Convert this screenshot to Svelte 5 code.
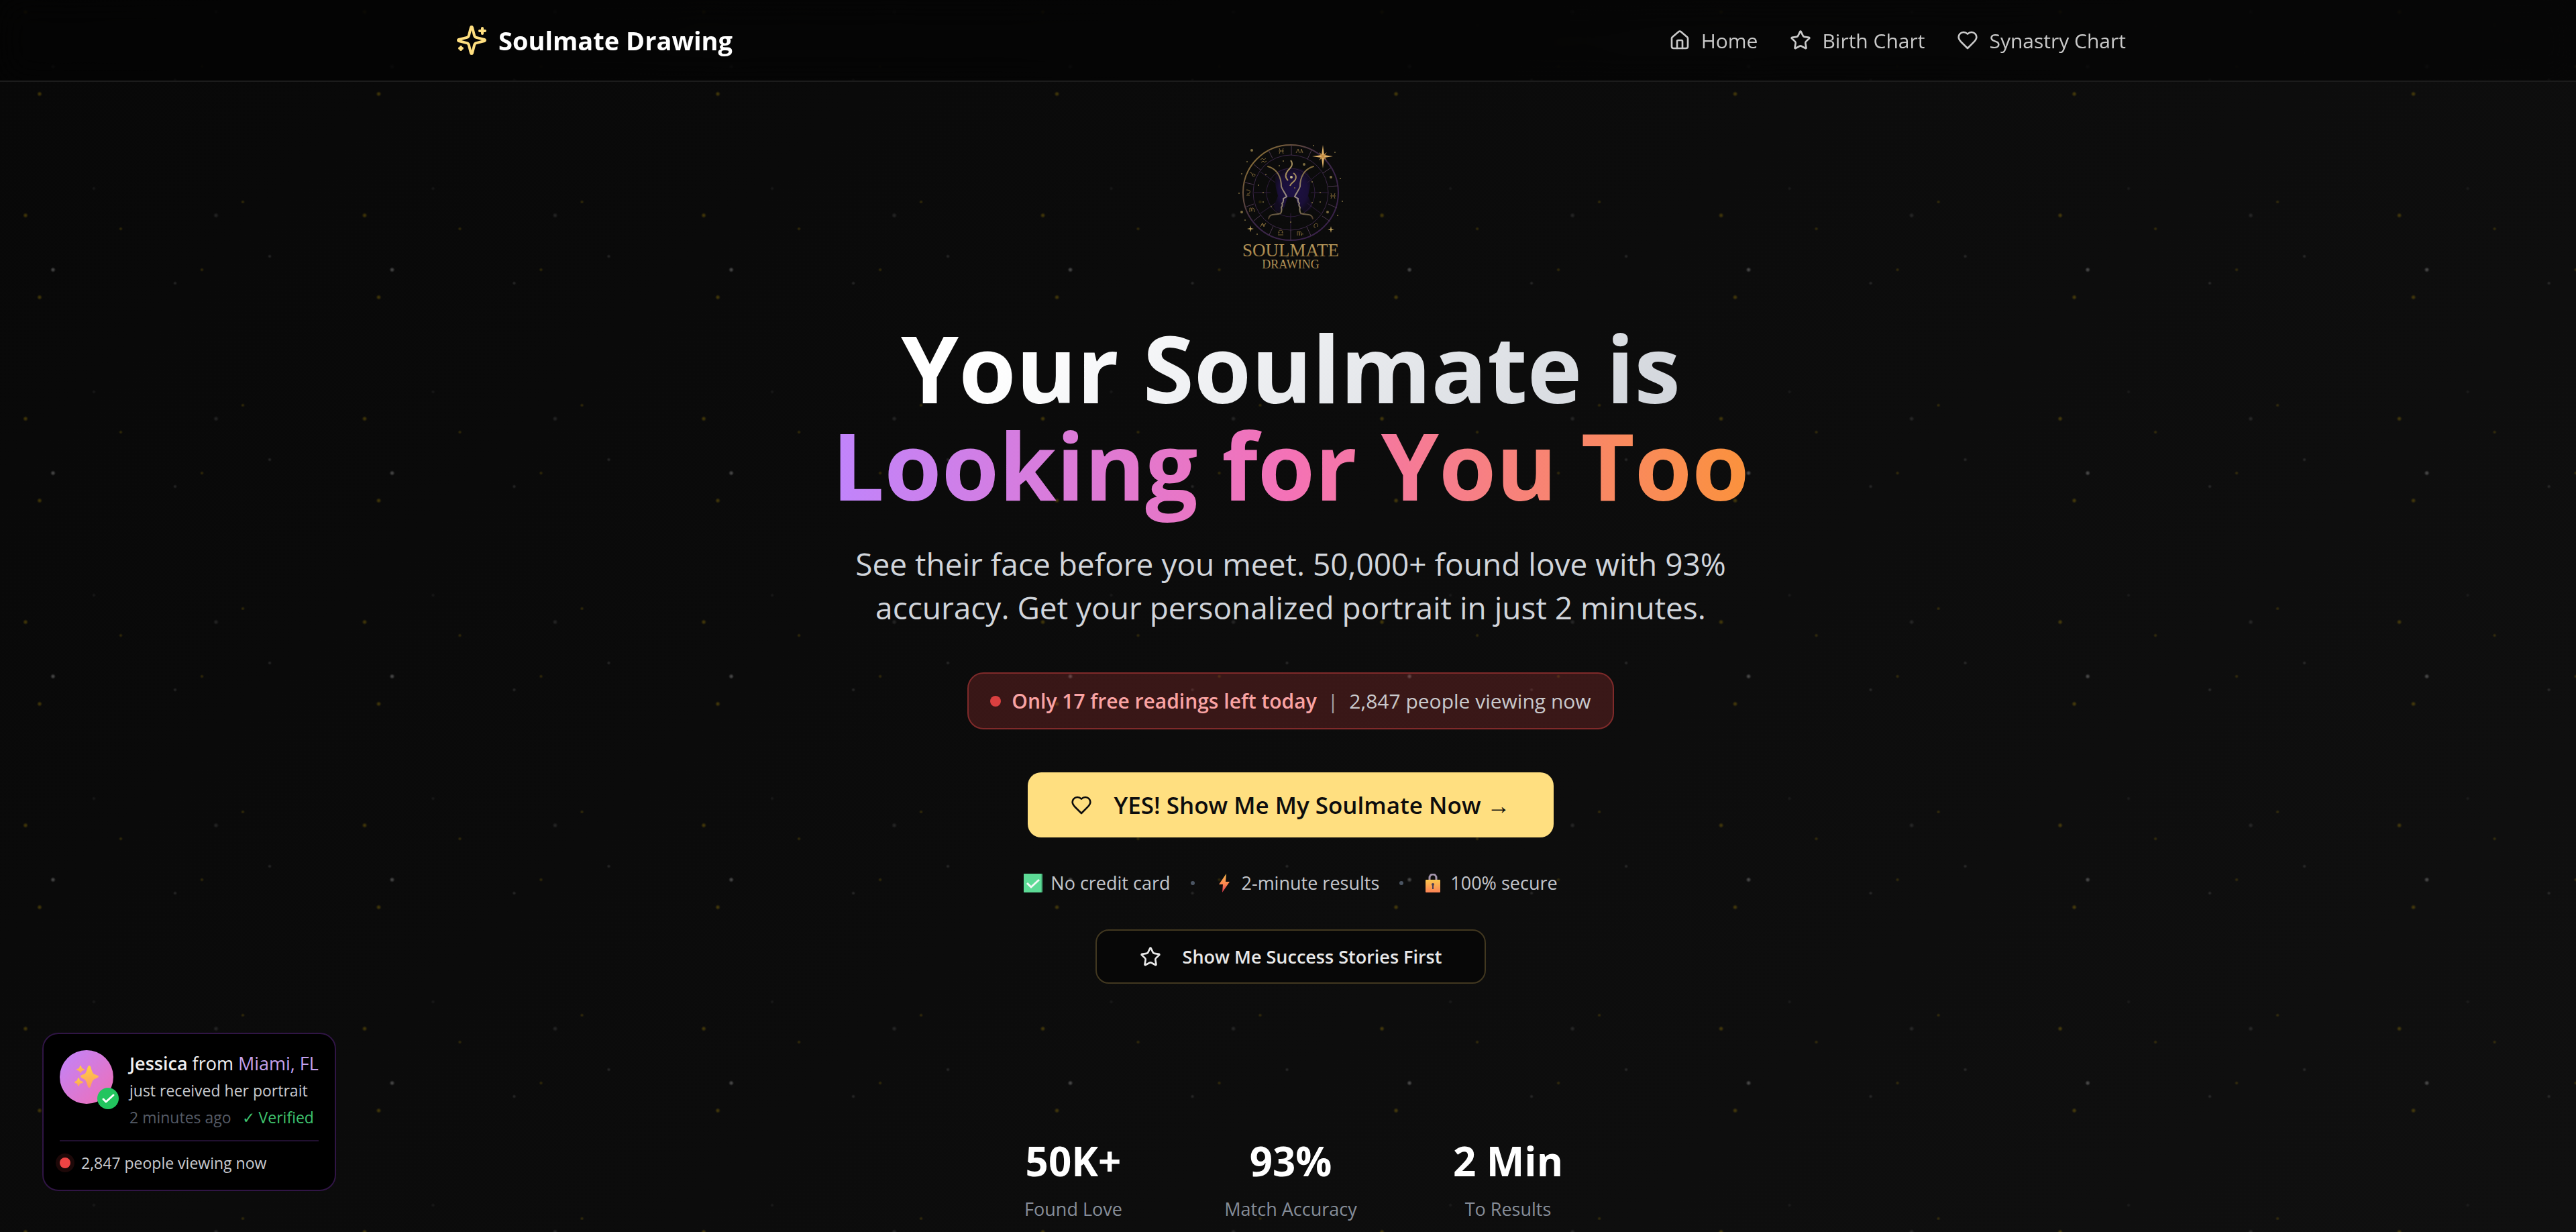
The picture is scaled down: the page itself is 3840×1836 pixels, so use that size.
<script>
    let spotsLeft = $state(17);
    let viewers = $state(2847);

    const navLinks = [
        { label: "Home", href: "#home", icon: "home" },
        { label: "Birth Chart", href: "#birth-chart", icon: "star" },
        { label: "Synastry Chart", href: "#synastry-chart", icon: "heart" },
    ];

    const stats = [
        { value: "50K+", label: "Found Love" },
        { value: "93%", label: "Match Accuracy" },
        { value: "2 Min", label: "To Results" },
    ];

    const icons = {
        home: [
            "M15 21v-8a1 1 0 0 0-1-1h-4a1 1 0 0 0-1 1v8",
            "M3 10a2 2 0 0 1 .709-1.528l7-5.999a2 2 0 0 1 2.582 0l7 5.999A2 2 0 0 1 21 10v9a2 2 0 0 1-2 2H5a2 2 0 0 1-2-2z",
        ],
        star: [
            "M11.525 2.295a.53.53 0 0 1 .95 0l2.31 4.679a2.123 2.123 0 0 0 1.595 1.16l5.166.756a.53.53 0 0 1 .294.904l-3.736 3.638a2.123 2.123 0 0 0-.611 1.878l.882 5.14a.53.53 0 0 1-.771.56l-4.618-2.428a2.122 2.122 0 0 0-1.973 0L6.396 21.01a.53.53 0 0 1-.77-.56l.881-5.139a2.122 2.122 0 0 0-.611-1.879L2.16 9.795a.53.53 0 0 1 .294-.906l5.165-.755a2.122 2.122 0 0 0 1.597-1.16z",
        ],
        heart: [
            "M19 14c1.49-1.46 3-3.21 3-5.5A5.5 5.5 0 0 0 16.5 3c-1.76 0-3 .5-4.5 2-1.5-1.5-2.74-2-4.5-2A5.5 5.5 0 0 0 2 8.5c0 2.3 1.5 4.05 3 5.5l7 7Z",
        ],
        sparkles: [
            "M9.937 15.5A2 2 0 0 0 8.5 14.063l-6.135-1.582a.5.5 0 0 1 0-.962L8.5 9.936A2 2 0 0 0 9.937 8.5l1.582-6.135a.5.5 0 0 1 .963 0L14.063 8.5A2 2 0 0 0 15.5 9.937l6.135 1.581a.5.5 0 0 1 0 .964L15.5 14.063a2 2 0 0 0-1.437 1.437l-1.582 6.135a.5.5 0 0 1-.963 0z",
            "M20 3v4",
            "M22 5h-4",
            "M4 17v2",
            "M5 18H3",
        ],
    };

    // zodiac wheel, in the logo's own 210 x 230 units
    const dividers = [
        [106, 26, 106, 41],
        [72, 34, 78, 46],
        [136, 34, 130, 47],
        [50, 55, 61, 64],
        [165, 60, 153, 68],
        [37, 82, 50, 85],
        [161, 88, 175, 87],
        [39, 118, 50, 114],
        [161, 114, 174, 120],
        [50, 139, 60, 131],
        [152, 132, 164, 140],
        [73, 160, 79, 147],
        [129, 148, 135, 161],
        [105, 152, 105, 168],
    ];

    const zodiac = [
        { x: 118, y: 35, d: "M-5 3l3-6l2 6M2 3l1-6l2 6" },
        { x: 91, y: 35, d: "M-3-4q3 4 0 8M3-4q-3 4 0 8M-4 0h8" },
        { x: 65, y: 49, d: "M-5-1l3-2l2 2l3-2M-4 3l3-2l2 2l3-2" },
        { x: 48, y: 70, d: "M-4-3q4 0 4 5q4 2 4-2q-3-2-5 1" },
        { x: 42, y: 97, d: "M-3 4h5M-3-4q7 0 5 4q-1 3-4 2" },
        { x: 48, y: 123, d: "M-4 3v-6q3-1 3 5v-5q4-1 4 6" },
        { x: 64, y: 145, d: "M-4 3l3-6l2 6l3-6M-3 0h6" },
        { x: 90, y: 157, d: "M-4 3h8M-4 0h2q-2-4 2-4t2 4h2" },
        { x: 119, y: 158, d: "M-4 3v-6q3-1 3 6v-6q3-1 3 6q1-4 3-2" },
        { x: 143, y: 146, d: "M-3 2q-1-4 3-5q4 1 2 5M-3 2a1 1 0 1 0 2 0" },
        { x: 168, y: 102, d: "M-3-4q3 4 0 8M3-4q-3 4 0 8M-4 0h8" },
    ];

    // x, y, radius
    const dust = [
        [47, 34, 2],
        [40, 51, 1],
        [32, 69, 1],
        [28, 98, 1],
        [32, 126, 2],
        [37, 138, 1],
        [55, 159, 1],
        [139, 27, 1],
        [171, 37, 1],
        [165, 74, 2],
        [179, 76, 1],
        [182, 110, 1],
        [160, 126, 2],
        [175, 131, 1],
        [94, 50, 1],
        [88, 57, 1],
        [125, 55, 2],
        [68, 70, 1],
        [57, 86, 1],
        [64, 97, 1],
        [64, 111, 1],
        [76, 118, 1],
        [137, 81, 1],
        [149, 97, 1],
        [137, 112, 1],
        [105, 141, 1],
        [111, 90, 1],
        [149, 111, 1],
    ];
</script>

{#snippet icon(name)}
    <svg
        class="icon"
        viewBox="0 0 24 24"
        fill="none"
        stroke="currentColor"
        stroke-width="2"
        stroke-linecap="round"
        stroke-linejoin="round"
        aria-hidden="true"
    >
        {#each icons[name] as d}
            <path {d} />
        {/each}
    </svg>
{/snippet}

<div class="page">
    <header class="header">
        <div class="header-inner">
            <a class="brand" href="#home">
                {@render icon("sparkles")}
                <span>Soulmate Drawing</span>
            </a>
            <nav class="nav">
                {#each navLinks as link}
                    <a href={link.href}>
                        {@render icon(link.icon)}
                        <span>{link.label}</span>
                    </a>
                {/each}
            </nav>
        </div>
    </header>

    <main class="hero">
        <svg class="logo" viewBox="0 0 210 230" role="img" aria-label="Soulmate Drawing">
            <defs>
                <linearGradient id="ring" x1="0" y1="0" x2="1" y2="1">
                    <stop offset="0.1" stop-color="#8f7437" />
                    <stop offset="0.45" stop-color="#3b2747" />
                    <stop offset="1" stop-color="#38204a" />
                </linearGradient>
                <linearGradient id="face" x1="0" y1="0" x2="0" y2="1">
                    <stop offset="0" stop-color="#7d6636" />
                    <stop offset="0.6" stop-color="#9c9088" />
                    <stop offset="0.85" stop-color="#807456" />
                    <stop offset="1" stop-color="#4a3826" />
                </linearGradient>
                <linearGradient id="gold" x1="0" y1="0" x2="0" y2="1">
                    <stop offset="0" stop-color="#c9a765" />
                    <stop offset="1" stop-color="#94753f" />
                </linearGradient>
                <radialGradient id="aura">
                    <stop offset="0" stop-color="#1d1145" />
                    <stop offset="0.75" stop-color="#1a0f38" />
                    <stop offset="1" stop-color="#120c20" />
                </radialGradient>
            </defs>
            <path
                d="M86 65q10-5 20-4q12-1 22 4q8 8 6 22l-3 15l6 14q-2 8-12 10l-9-10l-4-12h-12l-4 14l-6 9q-10-3-10-10l6-15l-3-12q-3-18 3-25z"
                fill="url(#aura)"
            />
            <g fill="none" stroke="#2e1c3c">
                <circle cx="105" cy="97" r="36" />
                <path d="M50 97h25M135 97h26M60 66l22 16M60 128l22-15M150 128l-20-15M150 66l-20 16M105 128v24" />
            </g>
            <circle cx="105" cy="97" r="71" fill="none" stroke="url(#ring)" stroke-width="2" />
            <circle cx="105" cy="97" r="56" fill="none" stroke="#3b2747" />
            <g stroke="#4d3850">
                {#each dividers as [x1, y1, x2, y2]}
                    <line {x1} {y1} {x2} {y2} />
                {/each}
            </g>
            <g fill="none" stroke="#7a6335">
                {#each zodiac as sign}
                    <path d={sign.d} transform="translate({sign.x} {sign.y})" />
                {/each}
            </g>
            <g fill="#7d6c3f">
                {#each dust as [cx, cy, r]}
                    <circle {cx} {cy} {r} />
                {/each}
            </g>
            <g fill="none" stroke="url(#face)" stroke-width="2" stroke-linecap="round">
                <path d="M71 58c14 4 20 16 20 30c2 6 6 10 8 15l-5 3c0 3 1 5-2 7c1 2 1 4-1 6c1 4 1 6-1 9c-8 3-16-1-18 8" />
                <path d="M139 58c-14 4-20 16-20 30c-2 6-6 10-8 15l5 3c0 3-1 5 2 7c-1 2-1 4 1 6c-1 4-1 6 1 9c8 3 16-1 18 8" />
            </g>
            <g fill="none" stroke="#a48d5c" stroke-width="2">
                <path d="M105 49c5 6 0 11-4 15c-5 6-4 11 0 15" />
                <path d="M109 68c5 3 5 8 1 12c-3 3-5 4-6 7" />
            </g>
            <circle cx="106" cy="74" r="2" fill="#c9bc8c" />
            <path d="M153 26l2 15l13 2l-13 2l-2 16l-2-16l-14-2l14-2z" fill="#e0b267" />
            <path d="M147 37l6 4l6-4l-4 6l4 6l-6-4l-6 4l4-6z" fill="#c58f45" />
            <path d="M45 146l1 4l4 1l-4 1l-1 4l-1-4l-4-1l4-1zM165 147l1 4l4 1l-4 1l-1 4l-1-4l-4-1l4-1z" fill="#b39857" />
            <text class="logo-name" x="105" y="192">SOULMATE</text>
            <text class="logo-sub" x="105" y="210">DRAWING</text>
        </svg>

        <h1>
            <span class="title-light">Your Soulmate is</span>
            <span class="title-color">Looking for You Too</span>
        </h1>

        <p class="lead">
            See their face before you meet. 50,000+ found love with 93%
            accuracy. Get your personalized portrait in just 2 minutes.
        </p>

        <div class="urgency">
            <span class="dot"></span>
            <strong>Only {spotsLeft} free readings left today</strong>
            <span class="bar">|</span>
            <span>{viewers.toLocaleString("en-US")} people viewing now</span>
        </div>

        <button class="cta">
            {@render icon("heart")}
            <span>YES! Show Me My Soulmate Now →</span>
        </button>

        <ul class="trust">
            <li>
                <svg class="emoji" viewBox="0 0 28 28" aria-hidden="true">
                    <rect width="28" height="28" rx="1" fill="#4bb67d" />
                    <rect width="26" height="28" rx="1" fill="#5ddb96" />
                    <path d="M5 14l6 6L23 9" fill="none" stroke="#f4f8f6" stroke-width="3" />
                </svg>
                No credit card
            </li>
            <li class="sep"></li>
            <li>
                <svg class="emoji" viewBox="0 0 28 28" aria-hidden="true">
                    <defs>
                        <linearGradient id="bolt" x1="0" y1="0" x2="0" y2="1">
                            <stop offset="0" stop-color="#fbbd4c" />
                            <stop offset="0.55" stop-color="#fb8550" />
                            <stop offset="1" stop-color="#e03650" />
                        </linearGradient>
                    </defs>
                    <path d="M17 0L6 16h6l-1 12L22 12h-6z" fill="url(#bolt)" />
                </svg>
                2-minute results
            </li>
            <li class="sep"></li>
            <li>
                <svg class="emoji" viewBox="0 0 28 28" aria-hidden="true">
                    <defs>
                        <linearGradient id="lock" x1="0" y1="0" x2="0" y2="1">
                            <stop offset="0" stop-color="#fbc64d" />
                            <stop offset="1" stop-color="#fb8255" />
                        </linearGradient>
                    </defs>
                    <path d="M9 10V6a5 5 0 0 1 10 0v4" fill="none" stroke="#a394ab" stroke-width="3" />
                    <rect x="3" y="9" width="22" height="19" rx="1" fill="url(#lock)" />
                    <circle cx="14" cy="16" r="2" fill="#4b3d53" />
                    <path d="M14 16v7" stroke="#4b3d53" stroke-width="2" />
                </svg>
                100% secure
            </li>
        </ul>

        <button class="stories">
            {@render icon("star")}
            <span>Show Me Success Stories First</span>
        </button>

        <dl class="stats">
            {#each stats as stat}
                <div class="stat">
                    <dd>{stat.value}</dd>
                    <dt>{stat.label}</dt>
                </div>
            {/each}
        </dl>
    </main>

    <aside class="toast">
        <div class="toast-main">
            <div class="avatar">
                <svg class="avatar-spark" viewBox="0 0 36 34" aria-hidden="true">
                    <defs>
                        <linearGradient id="spark" x1="0" y1="0" x2="0" y2="1">
                            <stop offset="0" stop-color="#ffd23f" />
                            <stop offset="1" stop-color="#ff9d62" />
                        </linearGradient>
                    </defs>
                    <g fill="url(#spark)">
                        <path d="M22 0q2 0 3 5q2 7 5 8q6 2 6 3q0 2-6 4q-3 1-5 8q-1 5-3 5t-3-5q-2-7-5-8q-5-2-5-4t5-3q3-1 5-8q1-5 3-5z" />
                        <path d="M9 0q1 0 2 4q4 1 4 2t-4 2q-1 3-2 3t-2-3q-4-1-4-2t4-2q1-4 2-4z" />
                        <path d="M6 18q1 0 2 4q5 2 5 3t-5 2q-1 4-2 4t-2-4q-4-1-4-2t4-3q1-4 2-4z" />
                    </g>
                </svg>
                <svg class="avatar-check" viewBox="0 0 32 32" aria-hidden="true">
                    <circle cx="16" cy="16" r="16" fill="#22c55e" />
                    <path
                        d="M9 17l4 4L24 11"
                        fill="none"
                        stroke="#fff"
                        stroke-width="3"
                        stroke-linecap="round"
                        stroke-linejoin="round"
                    />
                </svg>
            </div>
            <div class="toast-body">
                <p class="toast-who">
                    <strong>Jessica</strong> from <span>Miami, FL</span>
                </p>
                <p class="toast-what">just received her portrait</p>
                <p class="toast-when">
                    <span>2 minutes ago</span>
                    <span class="verified">✓ Verified</span>
                </p>
            </div>
        </div>
        <p class="toast-live">
            <span class="dot"></span>
            {viewers.toLocaleString("en-US")} people viewing now
        </p>
    </aside>
</div>

<style>
    :global(body) {
        background: #0c0c0c;
    }

    .page {
        --gold-strong: rgba(255, 205, 0, 0.22);
        --gold: rgba(255, 205, 0, 0.14);
        --white-strong: rgba(255, 255, 255, 0.24);
        --white: rgba(255, 255, 255, 0.1);
        --tile: calc(100vw * 250 / 1899) 303px;
        min-height: 100vh;
        box-sizing: border-box;
        font-family: "Segoe UI", "Open Sans", "Noto Sans", sans-serif;
        color: #fff;
        background:
            radial-gradient(circle at 38px 18px, var(--gold-strong) 1px, transparent 4px),
            radial-gradient(circle at 79px 99px, var(--white-strong) 1px, transparent 4px),
            radial-gradient(circle at 59px 140px, var(--gold-strong) 1px, transparent 4px),
            radial-gradient(circle at 322px 18px, var(--white) 1px, transparent 4px),
            radial-gradient(circle at 180px 38px, var(--gold) 1px, transparent 3px),
            radial-gradient(circle at 362px 301px, var(--gold) 1px, transparent 3px),
            radial-gradient(circle at 301px 99px, var(--gold) 1px, transparent 3px),
            radial-gradient(circle at 402px 79px, var(--white) 1px, transparent 3px),
            radial-gradient(circle at 261px 119px, var(--white) 1px, transparent 3px),
            radial-gradient(circle at 140px 281px, rgba(255, 255, 255, 0.05) 1px, transparent 3px),
            linear-gradient(135deg, #080808, #101010);
        background-size:
            var(--tile), var(--tile), var(--tile), var(--tile), var(--tile),
            var(--tile), var(--tile), var(--tile), var(--tile), var(--tile),
            100% 100%;
    }

    p,
    h1,
    ul,
    dl,
    dd {
        margin: 0;
        padding: 0;
    }

    a {
        color: inherit;
        text-decoration: none;
    }

    button {
        font-family: inherit;
        cursor: pointer;
    }

    .icon {
        width: 32px;
        height: 32px;
        flex-shrink: 0;
    }

    .header {
        padding-left: 8px;
        background: rgba(0, 0, 0, 0.5);
        backdrop-filter: blur(24px);
        border-bottom: 2px solid #1c1c1c;
    }

    .header-inner {
        display: flex;
        align-items: center;
        justify-content: space-between;
        max-width: 2490px;
        height: 120px;
        margin: 0 auto;
    }

    .brand {
        display: flex;
        align-items: center;
        gap: 16px;
        font-size: 38px;
        font-weight: 700;
    }

    .brand .icon {
        width: 48px;
        height: 48px;
        color: #ffdf80;
    }

    .nav {
        display: flex;
        gap: 48px;
        font-size: 30px;
        color: #c9c9c9;
    }

    .nav a {
        display: flex;
        align-items: center;
        gap: 16px;
    }

    .hero {
        display: flex;
        flex-direction: column;
        align-items: center;
        padding: 68px 0 16px 8px;
        text-align: center;
    }

    .logo {
        width: 210px;
        height: 230px;
    }

    .logo-name,
    .logo-sub {
        font-family: "Liberation Serif", serif;
        font-size: 27px;
        text-anchor: middle;
        fill: url(#gold);
    }

    .logo-sub {
        font-size: 18px;
    }

    h1 {
        margin-top: 55px;
        font-size: 138px;
        line-height: 145px;
        font-weight: 700;
    }

    h1 span {
        display: block;
        width: fit-content;
        margin: 0 auto;
        background-clip: text;
        -webkit-background-clip: text;
        color: transparent;
    }

    .title-light {
        background-image: linear-gradient(135deg, #fff 15%, #f3f4f6 35%, #d1d5db);
    }

    .title-color {
        padding-bottom: 16px;
        margin-bottom: -16px;
        background-image: linear-gradient(to right, #c084fc, #f472b6, #fb923c);
    }

    .lead {
        max-width: 1360px;
        margin-top: 43px;
        font-size: 46px;
        line-height: 65px;
        color: #d1d5db;
    }

    .urgency {
        display: flex;
        align-items: center;
        gap: 16px;
        box-sizing: border-box;
        height: 85px;
        margin-top: 64px;
        padding: 0 32px;
        font-size: 30px;
        color: #c9c9cc;
        background: rgba(239, 68, 68, 0.2);
        border: 2px solid #7f2a2a;
        border-radius: 24px;
    }

    .urgency strong {
        font-weight: 600;
        color: #f9a3a3;
    }

    .bar {
        color: #a8a2a8;
    }

    .dot {
        width: 16px;
        height: 16px;
        border-radius: 50%;
        background: #d94040;
    }

    .cta,
    .stories {
        display: flex;
        align-items: center;
        gap: 32px;
        box-sizing: border-box;
        padding: 0 64px;
        border-radius: 20px;
    }

    .cta {
        height: 97px;
        margin-top: 64px;
        font-size: 35px;
        font-weight: 600;
        color: #0d0d0d;
        background: #ffdf80;
        border: none;
    }

    .trust {
        display: flex;
        align-items: center;
        gap: 30px;
        margin-top: 48px;
        list-style: none;
        font-size: 27px;
        line-height: 40px;
        color: #c4c7cd;
    }

    .trust li {
        display: flex;
        align-items: center;
        gap: 12px;
    }

    .trust .sep {
        width: 6px;
        height: 6px;
        border-radius: 50%;
        background: #4b5563;
    }

    .emoji {
        width: 28px;
        height: 28px;
    }

    .stories {
        height: 81px;
        margin-top: 49px;
        font-size: 27px;
        font-weight: 600;
        color: #e8e8e8;
        background: #070707;
        border: 2px solid #423820;
    }

    .stats {
        display: grid;
        grid-template-columns: repeat(3, 260px);
        gap: 64px;
        margin-top: 228px;
    }

    .stat {
        display: flex;
        flex-direction: column;
        gap: 16px;
    }

    .stat dd {
        font-size: 60px;
        line-height: 72px;
        font-weight: 700;
    }

    .stat dt {
        font-size: 27px;
        line-height: 40px;
        color: #868d99;
    }

    .toast {
        position: fixed;
        left: 63px;
        bottom: 61px;
        padding: 24px;
        background: #000;
        border: 2px solid #301545;
        border-radius: 24px;
    }

    .toast-main {
        display: flex;
        gap: 24px;
    }

    .avatar {
        position: relative;
        display: flex;
        align-items: center;
        justify-content: center;
        width: 80px;
        height: 80px;
        border-radius: 50%;
        background: linear-gradient(135deg, #c084fc, #f06eb4);
    }

    .avatar-spark {
        width: 36px;
        height: 34px;
    }

    .avatar-check {
        position: absolute;
        right: -8px;
        bottom: -8px;
        width: 32px;
        height: 32px;
    }

    .toast-body {
        line-height: 40px;
        font-size: 23px;
    }

    .toast-who {
        font-size: 27px;
        color: #f0f0f0;
    }

    .toast-who strong {
        font-weight: 600;
    }

    .toast-who span {
        color: #c4a0ec;
    }

    .toast-what {
        color: #c8cacf;
    }

    .toast-when {
        display: flex;
        gap: 16px;
        color: #555b66;
    }

    .verified {
        color: #3fc46f;
    }

    .toast-live {
        display: flex;
        align-items: center;
        gap: 16px;
        margin-top: 14px;
        padding-top: 16px;
        font-size: 23px;
        line-height: 32px;
        color: #c8cacf;
        border-top: 2px solid #211030;
    }

    .toast-live .dot {
        background: #ef4444;
        box-shadow: 0 0 0 6px rgba(239, 68, 68, 0.12);
    }
</style>
